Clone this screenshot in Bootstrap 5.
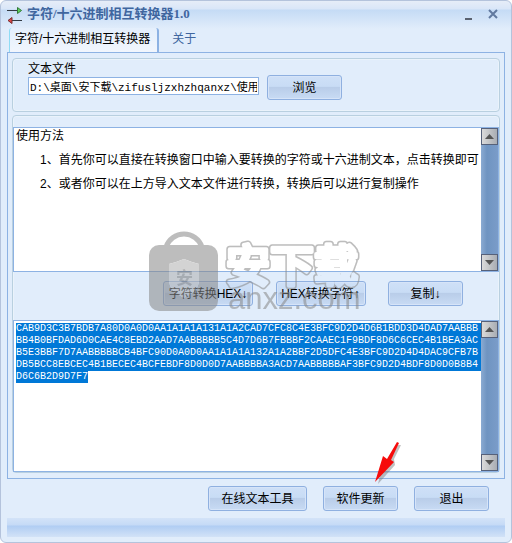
<!DOCTYPE html>
<html lang="zh-CN">
<head>
<meta charset="utf-8">
<meta name="viewport" content="width=device-width, initial-scale=1">
<title>字符/十六进制相互转换器1.0</title>
<link href="https://cdn.jsdelivr.net/npm/bootstrap@5.3.0/dist/css/bootstrap.min.css" rel="stylesheet">
<style>
body{font-family:"Liberation Sans","Noto Sans CJK SC",sans-serif;font-size:12px;line-height:16px;color:#000;background:#fff}
.app-window{min-height:100vh;border:1px solid #b4c3dc;border-radius:6px;background:linear-gradient(#e6edf8 0,#d9e6f8 8px,#c5dbf5 9px,#e1edfb 28px);padding:0 6px 5px}
.title-bar{height:27px;padding-top:2px;color:#3f669f}
.title-bar h1{font-family:"Liberation Serif","Noto Sans CJK SC",serif;font-size:13px;line-height:22px;font-weight:700}
.caption-btn{width:16px;height:20px;line-height:0}
.tab-strip{padding-left:2px}
.tab-strip .nav-link{height:24px;padding:0 5px;line-height:22px;color:#3f669f;border:0}
.tab-strip .nav-link.active{color:#000;background:linear-gradient(#e4effc,#f1f6fd);border-left:1px solid #8fdcf5;border-right:2px solid #8db2e3;border-radius:3px 3px 0 0;padding-right:7px}
.tab-panel{border:1px solid #8db2e3;padding:5px 4px}
.group{border:1px solid #b9d0e0;border-radius:4px;box-shadow:inset 0 0 0 1px #eaf3fb}
.file-group{height:54px;padding:2px 14px 0 15px}
.convert-group{margin-top:3px;padding-top:11px}
.file-input{font-family:"Liberation Mono","Noto Sans CJK SC",monospace;font-size:11px;line-height:14px;width:231px;height:18px;padding:0 1px;border:1px solid #8db2e3;border-radius:0;color:#000;background:#fff}
.skin-btn{--bs-btn-color:#000;--bs-btn-hover-color:#000;font-size:12px;line-height:16px;height:25px;width:75px;padding:0;border:1px solid #8fb0e0;border-radius:3px;background:linear-gradient(#cfe0f7 0,#c8dcf5 45%,#b9cde9 50%,#c8dbf4 100%);box-shadow:inset 0 0 0 1px #d6e4f8}
.browse-btn{margin-top:14px}
.wide-btn{width:90px}
.link-btn{width:99px}
.memo{border:1px solid #8db2e3;background:#fff}
.memo textarea,.memo textarea:focus{display:block;border:0;border-radius:0;padding:2px 0 0 2px;resize:none;overflow:hidden;color:#000;background:#fff;outline:0;font-size:12px;line-height:12px;font-family:"Liberation Sans","Noto Sans CJK SC",sans-serif;box-shadow:none}
.help-memo{height:145px}
.hex-memo{height:152px}
.help-memo textarea{white-space:pre}
.hex-memo textarea,.hex-memo textarea:focus{font-family:"Liberation Mono",monospace;font-size:10px;word-break:break-all}
.hex-memo textarea::selection{background:#0078d7;color:#fff}
.scroll-track{width:17px;background:linear-gradient(90deg,#8babd2,#6f94c1 35%,#7a9cc9)}
.scroll-btn{height:17px;border:1px solid #56617a;background:linear-gradient(90deg,#dadada,#a9adb3);line-height:0}
.action-row{height:48px;padding:9px 36px 0 150px}
.foot-row{padding:7px 16px 7px 0}
.status-strip{height:19px;background:linear-gradient(#d3e3f8 0,#c5daf6 7px,#b0cdf3 8px,#d2e2f7 19px)}
.watermark{left:146px;top:226px;pointer-events:none}
.pointer{left:368px;top:438px;pointer-events:none}
</style>
</head>
<body>
<main class="app-window position-relative d-flex flex-column">
  <header class="title-bar d-flex align-items-start">
    <svg class="flex-shrink-0 mt-1" width="16" height="17" viewBox="0 0 16 17" aria-hidden="true"><path d="M0 3.500H11M5 13.500H15" stroke="#333b44" fill="none"/><path d="M10.500.500l4 3-4 3z" fill="#5bd05b" stroke="#347a38"/><path d="M5 10.500l-4 3 4 3z" fill="#e04a4a" stroke="#7a2c2c"/></svg>
    <h1 class="mb-0 ms-1 flex-grow-1">字符/十六进制相互转换器1.0</h1>
    <button class="btn border-0 p-0 caption-btn" aria-label="最小化"><svg width="8" height="14"><path d="M0 13h7" stroke="#5a6270" stroke-width="2"/></svg></button>
    <button class="btn border-0 p-0 ms-2 me-1 caption-btn" aria-label="关闭"><svg width="10" height="12"><path d="M1 3l8 8M9 3l-8 8" stroke="#61799f" stroke-width="2"/></svg></button>
  </header>
  <nav class="nav tab-strip" aria-label="页面">
    <a class="nav-link active" aria-current="page" href="#convert">字符/十六进制相互转换器</a>
    <a class="nav-link ms-2" href="#about">关于</a>
  </nav>
  <section class="tab-panel" id="convert">
    <div class="group file-group d-flex align-items-start gap-2">
      <div>
        <label class="d-block" for="path">文本文件</label>
        <input class="file-input d-block" id="path" type="text" value="D:\桌面\安下载\zifusljzxhzhqanxz\使用说明.txt">
      </div>
      <button class="btn skin-btn browse-btn">浏览</button>
    </div>
    <div class="group convert-group">
      <div class="memo help-memo d-flex">
        <textarea class="form-control flex-grow-1" aria-label="使用方法">使用方法

　　1、首先你可以直接在转换窗口中输入要转换的字符或十六进制文本，点击转换即可

　　2、或者你可以在上方导入文本文件进行转换，转换后可以进行复制操作</textarea>
        <div class="scroll-track flex-shrink-0 d-flex flex-column justify-content-between">
          <button class="btn rounded-0 p-0 scroll-btn" aria-label="向上滚动"><svg width="9" height="5"><path d="M0 5l4.500-5L9 5z" fill="#555"/></svg></button>
          <button class="btn rounded-0 p-0 scroll-btn" aria-label="向下滚动"><svg width="9" height="5"><path d="M0 0l4.500 5L9 0z" fill="#555"/></svg></button>
        </div>
      </div>
      <div class="action-row d-flex justify-content-between">
        <button class="btn skin-btn wide-btn">字符转换HEX↓</button>
        <button class="btn skin-btn wide-btn">HEX转换字符↑</button>
        <button class="btn skin-btn">复制↓</button>
      </div>
      <div class="memo hex-memo d-flex">
        <textarea class="form-control flex-grow-1" id="hex" aria-label="转换结果" spellcheck="false">CAB9D3C3B7BDB7A80D0A0D0AA1A1A1A131A1A2CAD7CFC8C4E3BFC9D2D4D6B1BDD3D4DAD7AABBBBB4B0BFDAD6D0CAE4C8EBD2AAD7AABBBBB5C4D7D6B7FBBBF2CAAEC1F9BDF8D6C6CEC4B1BEA3ACB5E3BBF7D7AABBBBBCB4BFC90D0A0D0AA1A1A1A132A1A2BBF2D5DFC4E3BFC9D2D4D4DAC9CFB7BDB5BCC8EBCEC4B1BECEC4BCFEBDF8D0D0D7AABBBBA3ACD7AABBBBBAF3BFC9D2D4BDF8D0D0B8B4D6C6B2D9D7F7</textarea>
        <div class="scroll-track flex-shrink-0 d-flex flex-column justify-content-between">
          <button class="btn rounded-0 p-0 scroll-btn" aria-label="向上滚动"><svg width="9" height="5"><path d="M0 5l4.500-5L9 5z" fill="#555"/></svg></button>
          <button class="btn rounded-0 p-0 scroll-btn" aria-label="向下滚动"><svg width="9" height="5"><path d="M0 0l4.500 5L9 0z" fill="#555"/></svg></button>
        </div>
      </div>
    </div>
  </section>
  <div class="foot-row d-flex justify-content-end">
    <button class="btn skin-btn link-btn">在线文本工具</button>
    <button class="btn skin-btn ms-3">软件更新</button>
    <button class="btn skin-btn ms-3">退出</button>
  </div>
  <footer class="status-strip"></footer>
  <svg class="watermark position-absolute" width="230" height="90" viewBox="0 0 230 90" aria-hidden="true">
    <defs>
      <mask id="rim" maskUnits="userSpaceOnUse" x="70" y="0" width="160" height="90">
        <g font-family="Noto Sans CJK SC" font-size="44" font-weight="500" stroke-linejoin="round">
          <text x="79" y="55" fill="#fff" stroke="#fff" stroke-width="7">安下载</text>
          <text x="79" y="55" fill="#000" stroke="#000" stroke-width="4">安下载</text>
        </g>
      </mask>
    </defs>
    <g opacity=".55">
      <path d="M19 20a19 19 0 0 1 36 0" fill="none" stroke="#888" stroke-width="5"/>
      <path fill-rule="evenodd" d="M12 18H61a10 10 0 0 1 10 10V74a10 10 0 0 1-10 10H12A10 10 0 0 1 2 74V28A10 10 0 0 1 12 18zM22 37V55Q23 64 37 71Q51 64 52 55V37Q44 35 37 32Q30 35 22 37z" fill="#888"/>
      <path d="M22 37Q30 35 37 32Q44 35 52 37V55Q51 64 37 71Q23 64 22 55z" fill="#b0b0b0"/>
      <text x="29" y="57" font-size="17" font-weight="700" fill="#777" font-family="Noto Sans CJK SC">安</text>
      <path d="M70 0h160v90H70z" fill="#888" mask="url(#rim)"/>
      <text x="81" y="82" font-size="31" fill="#888" font-family="Liberation Sans">anxz.com</text>
    </g>
  </svg>
  <svg class="pointer position-absolute" width="36" height="46" viewBox="0 0 36 46" aria-hidden="true"><path d="M32 6L25 20L26 26L9 45L15 20L19 22L29 6z" fill="#777" opacity=".45"/><path d="M30 4L22 21L25 23L6 43L14 17L18 20L28 3z" fill="#f60b0b"/></svg>
</main>
<script src="https://cdn.jsdelivr.net/npm/bootstrap@5.3.0/dist/js/bootstrap.bundle.min.js"></script>
<script>
const hex=document.getElementById('hex');
hex.focus({preventScroll:true});
hex.select();
</script>
</body>
</html>
